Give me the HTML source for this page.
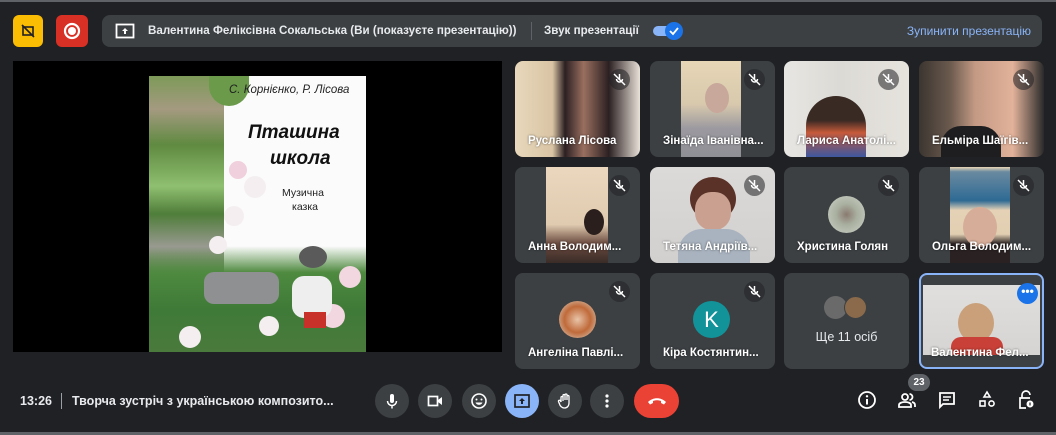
<!DOCTYPE html>
<html><head><meta charset="utf-8"><style>
*{margin:0;padding:0;box-sizing:border-box}
body{width:1056px;height:435px;background:#202124;font-family:"Liberation Sans",sans-serif;color:#e8eaed;position:relative;overflow:hidden}
.a{position:absolute}
.tile{position:absolute;width:125px;height:96px;background:#3c4043;border-radius:8px;overflow:hidden}
.nm{position:absolute;left:13px;bottom:10px;font-size:11.5px;font-weight:bold;color:#fff;white-space:nowrap;text-shadow:0 0 2px rgba(0,0,0,.6)}
.mic{position:absolute;right:10px;top:8px;width:21px;height:21px;border-radius:50%;background:rgba(32,33,36,.55)}
.mic svg{position:absolute;left:3px;top:3px}
.btn{position:absolute;top:384px;width:34px;height:34px;border-radius:50%;background:#3c4043}
.btn svg{position:absolute;left:8px;top:8px}
.ri{position:absolute;top:390px}
.fl{position:absolute;border-radius:50%;background:#f4eef0}
</style></head><body>
<div class="a" style="left:0;top:0;width:1056px;height:2px;background:#5f6368"></div>
<!-- top -->
<div class="a" style="left:13px;top:15px;width:30px;height:32px;background:#fbbc04;border-radius:6px"><svg width="30" height="32"><g stroke="#202124" stroke-width="1.6" fill="none"><rect x="10" y="12" width="10" height="8"/><line x1="9" y1="10" x2="21" y2="22"/></g></svg></div>
<div class="a" style="left:56px;top:15px;width:32px;height:32px;background:#d93025;border-radius:6px"><svg width="32" height="32"><circle cx="16" cy="16" r="7" fill="none" stroke="#fff" stroke-width="2.2"/><circle cx="16" cy="16" r="4" fill="#fff"/></svg></div>
<div class="a" style="left:102px;top:15px;width:940px;height:32px;background:#3c4043;border-radius:8px">
<svg class="a" style="left:13px;top:8px" width="20" height="16"><rect x="1.5" y="1.5" width="17" height="13" fill="none" stroke="#fff" stroke-width="1.8"/><path d="M10 5l-3 3h2v3h2V8h2z" fill="#fff"/></svg>
<div class="a" style="left:46px;top:9px;font-size:11.6px;font-weight:bold;color:#e8eaed;white-space:nowrap">Валентина Феліксівна Сокальська (Ви (показуєте презентацію))</div>
<div class="a" style="left:429px;top:7px;width:1px;height:18px;background:#5f6368"></div>
<div class="a" style="left:442px;top:9px;font-size:11.6px;font-weight:bold;white-space:nowrap">Звук презентації</div>
<div class="a" style="left:551px;top:11px;width:26px;height:10px;border-radius:5px;background:#8ab4f8"></div>
<div class="a" style="left:563px;top:7px;width:18px;height:18px;border-radius:50%;background:#1a73e8"><svg width="18" height="18"><path d="M5 9l3 3 5-6" stroke="#fff" stroke-width="1.8" fill="none"/></svg></div>
<div class="a" style="right:11px;top:9px;font-size:12px;color:#8ab4f8">Зупинити презентацію</div>
</div>
<!-- presentation -->
<div class="a" style="left:13px;top:61px;width:489px;height:291px;background:#000"></div>
<div class="a" style="left:149px;top:76px;width:217px;height:276px;background:#fbfbfb;overflow:hidden">
<div class="a" style="left:0;top:0;width:75px;height:276px;background:linear-gradient(180deg,#7d9a58,#a49a80 12%,#5f8a40 25%,#8fbf70 40%,#4f7d3a 50%,#9a9a92 62%,#5c8040 80%,#3d6b30)"></div>
<div class="a" style="left:60px;top:0;width:40px;height:30px;background:#6a9a4a;border-radius:0 0 20px 20px"></div>
<div class="a" style="left:0;top:170px;width:217px;height:106px;background:linear-gradient(180deg,rgba(80,130,60,0) 0,#4f8a40 25%,#3f7a38 60%,#4a7a3c)"></div>
<div class="fl" style="left:80px;top:85px;width:18px;height:18px;background:#f0d0dc"></div>
<div class="fl" style="left:95px;top:100px;width:22px;height:22px"></div>
<div class="fl" style="left:75px;top:130px;width:20px;height:20px"></div>
<div class="fl" style="left:60px;top:160px;width:18px;height:18px"></div>
<div class="fl" style="left:190px;top:190px;width:22px;height:22px;background:#f2d6e0"></div>
<div class="fl" style="left:172px;top:228px;width:24px;height:24px;background:#f2d6e0"></div>
<div class="fl" style="left:110px;top:240px;width:20px;height:20px"></div>
<div class="fl" style="left:30px;top:250px;width:22px;height:22px"></div>
<div class="a" style="left:55px;top:196px;width:75px;height:32px;background:#8f9091;border-radius:10px"></div>
<div class="a" style="left:143px;top:200px;width:40px;height:42px;background:#eeeeee;border-radius:12px"></div>
<div class="a" style="left:150px;top:170px;width:28px;height:22px;background:#5a5a5a;border-radius:50%"></div>
<div class="a" style="left:155px;top:236px;width:22px;height:16px;background:#c8302a"></div>
<div class="a" style="left:80px;top:8px;font-size:11.5px;font-style:italic;color:#222">С. Корнієнко, Р. Лісова</div>
<div class="a" style="left:99px;top:46px;font-size:19px;font-weight:bold;font-style:italic;color:#111">Пташина</div>
<div class="a" style="left:121px;top:72px;font-size:19px;font-weight:bold;font-style:italic;color:#111">школа</div>
<div class="a" style="left:133px;top:111px;font-size:10.5px;color:#222">Музична</div>
<div class="a" style="left:143px;top:125px;font-size:10.5px;color:#222">казка</div>
</div>
<!-- tiles -->
<div class="tile" style="left:515px;top:61px;background:linear-gradient(90deg,#e8d8bc 0,#d9c4a4 30%,#2b2022 40%,#9a6f5f 55%,#2b2022 75%,#e9e2d8 100%)"><div class="mic"><svg width="15" height="15"><path d="M7.5 2v6M4.5 7a3 3 0 0 0 6 0M2 2l11 11" stroke="#fff" stroke-width="1.5" fill="none"/></svg></div><div class="nm">Руслана Лісова</div></div>
<div class="tile" style="left:650px;top:61px"><div class="a" style="left:31px;top:0;width:60px;height:96px;background:linear-gradient(180deg,#e7d6b6,#d8c9ad 45%,#9c9aa0 70%,#8f8f96)"></div><div class="a" style="left:55px;top:22px;width:24px;height:30px;border-radius:50%;background:#c7a89a"></div><div class="mic"><svg width="15" height="15"><path d="M7.5 2v6M4.5 7a3 3 0 0 0 6 0M2 2l11 11" stroke="#fff" stroke-width="1.5" fill="none"/></svg></div><div class="nm">Зінаїда Іванівна...</div></div>
<div class="tile" style="left:784px;top:61px;background:linear-gradient(90deg,#e8e6e2 0,#dcdad5 45%,#e6e3dd 100%)"><div class="a" style="left:22px;top:35px;width:60px;height:61px;border-radius:30px 30px 0 0;background:linear-gradient(180deg,#3a2a24 40%,#c65a3a 60%,#3e57a0)"></div><div class="mic"><svg width="15" height="15"><path d="M7.5 2v6M4.5 7a3 3 0 0 0 6 0M2 2l11 11" stroke="#fff" stroke-width="1.5" fill="none"/></svg></div><div class="nm">Лариса Анатолі...</div></div>
<div class="tile" style="left:919px;top:61px;background:linear-gradient(90deg,#3b3530 0,#6b5a4e 25%,#c49a85 45%,#e2b29a 75%,#2a2a2a 100%)"><div class="a" style="left:22px;top:65px;width:60px;height:31px;background:#1e1e20;border-radius:20px 20px 0 0"></div><div class="mic"><svg width="15" height="15"><path d="M7.5 2v6M4.5 7a3 3 0 0 0 6 0M2 2l11 11" stroke="#fff" stroke-width="1.5" fill="none"/></svg></div><div class="nm">Ельміра Шаїгів...</div></div>

<div class="tile" style="left:515px;top:167px"><div class="a" style="left:31px;top:0;width:62px;height:96px;background:linear-gradient(180deg,#ead7bd,#e0cbb0 60%,#6a4a3e 80%,#3a2c28)"></div><div class="a" style="left:69px;top:42px;width:20px;height:26px;border-radius:50%;background:#2a1f1c"></div><div class="mic"><svg width="15" height="15"><path d="M7.5 2v6M4.5 7a3 3 0 0 0 6 0M2 2l11 11" stroke="#fff" stroke-width="1.5" fill="none"/></svg></div><div class="nm">Анна Володим...</div></div>
<div class="tile" style="left:650px;top:167px;background:linear-gradient(180deg,#dcdad8,#d2d0ce)"><div class="a" style="left:40px;top:10px;width:46px;height:44px;border-radius:50%;background:#5a3228"></div><div class="a" style="left:45px;top:25px;width:36px;height:38px;border-radius:45%;background:#caa190"></div><div class="a" style="left:28px;top:62px;width:72px;height:34px;border-radius:24px 24px 0 0;background:#a9b3bf"></div><div class="mic"><svg width="15" height="15"><path d="M7.5 2v6M4.5 7a3 3 0 0 0 6 0M2 2l11 11" stroke="#fff" stroke-width="1.5" fill="none"/></svg></div><div class="nm">Тетяна Андріїв...</div></div>
<div class="tile" style="left:784px;top:167px"><div class="a" style="left:44px;top:29px;width:37px;height:37px;border-radius:50%;background:radial-gradient(circle,#8a7a70 0,#a9b0a0 40%,#cdd2c8 100%)"></div><div class="mic"><svg width="15" height="15"><path d="M7.5 2v6M4.5 7a3 3 0 0 0 6 0M2 2l11 11" stroke="#fff" stroke-width="1.5" fill="none"/></svg></div><div class="nm">Христина Голян</div></div>
<div class="tile" style="left:919px;top:167px"><div class="a" style="left:31px;top:0;width:60px;height:96px;background:linear-gradient(180deg,#e9d6b6 0,#6a8aa0 5%,#2e6a94 35%,#e5d2b6 45%,#e2cfb2 70%,#2a2222 80%)"></div><div class="a" style="left:44px;top:40px;width:34px;height:40px;border-radius:50%;background:#d6ad98"></div><div class="mic"><svg width="15" height="15"><path d="M7.5 2v6M4.5 7a3 3 0 0 0 6 0M2 2l11 11" stroke="#fff" stroke-width="1.5" fill="none"/></svg></div><div class="nm">Ольга Володим...</div></div>

<div class="tile" style="left:515px;top:273px"><div class="a" style="left:44px;top:28px;width:37px;height:37px;border-radius:50%;background:radial-gradient(circle,#e8c4a8 0,#c06a3a 50%,#dbd8cc 100%)"></div><div class="mic"><svg width="15" height="15"><path d="M7.5 2v6M4.5 7a3 3 0 0 0 6 0M2 2l11 11" stroke="#fff" stroke-width="1.5" fill="none"/></svg></div><div class="nm">Ангеліна Павлі...</div></div>
<div class="tile" style="left:650px;top:273px"><div class="a" style="left:43px;top:28px;width:37px;height:37px;border-radius:50%;background:#12939a;color:#fff;font-size:22px;text-align:center;line-height:37px">K</div><div class="mic"><svg width="15" height="15"><path d="M7.5 2v6M4.5 7a3 3 0 0 0 6 0M2 2l11 11" stroke="#fff" stroke-width="1.5" fill="none"/></svg></div><div class="nm">Кіра Костянтин...</div></div>
<div class="tile" style="left:784px;top:273px"><div class="a" style="left:40px;top:23px;width:23px;height:23px;border-radius:50%;background:#6a6a6a"></div><div class="a" style="left:60px;top:23px;width:23px;height:23px;border-radius:50%;background:#8a6a4a;border:1px solid #3c4043"></div><div class="a" style="left:0;width:125px;top:57px;text-align:center;font-size:12.5px;color:#e8eaed">Ще 11 осіб</div></div>
<div class="tile" style="left:919px;top:273px;border:2px solid #8ab4f8;background:#3c4043"><div class="a" style="left:2px;top:10px;width:117px;height:70px;background:linear-gradient(180deg,#e0dfdd,#d6d4d2)"></div><div class="a" style="left:37px;top:28px;width:36px;height:40px;border-radius:50%;background:#c9a07a"></div><div class="a" style="left:30px;top:62px;width:52px;height:18px;background:#c84038;border-radius:10px 10px 0 0"></div><div class="a" style="right:4px;top:8px;width:21px;height:21px;border-radius:50%;background:#1a73e8;color:#fff;font-size:12px;font-weight:bold;text-align:center;line-height:17px">•••</div><div class="nm" style="left:10px;bottom:8px">Валентина Фел...</div></div>

<!-- bottom -->
<div class="a" style="left:20px;top:394px;font-size:12.5px;font-weight:bold;color:#e8eaed">13:26</div>
<div class="a" style="left:61px;top:393px;width:1px;height:16px;background:#9aa0a6"></div>
<div class="a" style="left:72px;top:394px;font-size:12.5px;font-weight:bold;color:#e8eaed">Творча зустріч з українською композито...</div>

<div class="btn" style="left:375px"><svg width="18" height="18"><rect x="7" y="2" width="4" height="9" rx="2" fill="#fff"/><path d="M4.5 9a4.5 4.5 0 0 0 9 0M9 13.5v3" stroke="#fff" stroke-width="1.5" fill="none"/></svg></div>
<div class="btn" style="left:418px"><svg width="18" height="18"><rect x="2.5" y="4.5" width="9" height="9" fill="none" stroke="#fff" stroke-width="1.7"/><path d="M12 8l4-3v8l-4-3z" fill="#fff"/></svg></div>
<div class="btn" style="left:462px"><svg width="18" height="18"><circle cx="9" cy="9" r="7" fill="none" stroke="#fff" stroke-width="1.6"/><circle cx="6.5" cy="7.5" r="1" fill="#fff"/><circle cx="11.5" cy="7.5" r="1" fill="#fff"/><path d="M5.5 10.5a3.8 3.8 0 0 0 7 0z" fill="#fff"/></svg></div>
<div class="btn" style="left:505px;background:#8ab4f8"><svg width="18" height="18"><rect x="2" y="3" width="14" height="12" fill="none" stroke="#202124" stroke-width="1.7"/><path d="M9 6l-3 3h2v3h2V9h2z" fill="#202124"/></svg></div>
<div class="btn" style="left:548px"><svg width="18" height="18"><path d="M5 10V5.5a1 1 0 0 1 2 0V9M7 8V3.5a1 1 0 0 1 2 0V8M9 8V3a1 1 0 0 1 2 0v5M11 8V4.5a1 1 0 0 1 2 0V11c0 3-2 5-4.5 5S4 14 3.5 12L2.5 9.5a1 1 0 0 1 2-.5L5 10" stroke="#fff" stroke-width="1.3" fill="none"/></svg></div>
<div class="btn" style="left:590px"><svg width="18" height="18"><circle cx="9" cy="4" r="1.6" fill="#fff"/><circle cx="9" cy="9" r="1.6" fill="#fff"/><circle cx="9" cy="14" r="1.6" fill="#fff"/></svg></div>
<div class="a" style="left:634px;top:384px;width:45px;height:34px;border-radius:17px;background:#ea4335"><svg class="a" style="left:12px;top:9px" width="22" height="16"><path d="M2 9c5-5 13-5 18 0l-2 2.5-3-1.5v-2c-2.5-1-5.5-1-8 0v2L4 11.5z" fill="#fff"/></svg></div>

<svg class="ri" style="left:857px" width="20" height="20"><circle cx="10" cy="10" r="8" fill="none" stroke="#fff" stroke-width="1.8"/><rect x="9" y="9" width="2" height="5.5" fill="#fff"/><circle cx="10" cy="6.3" r="1.2" fill="#fff"/></svg>
<div class="a" style="left:908px;top:374px;width:22px;height:17px;border-radius:9px;background:#5f6368;font-size:10px;font-weight:bold;text-align:center;line-height:17px;color:#fff">23</div>
<svg class="ri" style="left:897px" width="20" height="20"><circle cx="8" cy="7" r="3" fill="none" stroke="#fff" stroke-width="1.8"/><path d="M2 17v-2c0-2 3-3 6-3s6 1 6 3v2z" fill="none" stroke="#fff" stroke-width="1.8"/><path d="M12.5 4a3 3 0 0 1 0 6M15 12c2 .5 3 1.5 3 3v2" stroke="#fff" stroke-width="1.8" fill="none"/></svg>
<svg class="ri" style="left:937px" width="20" height="20"><path d="M3 3h14v11H6l-3 3z" fill="none" stroke="#fff" stroke-width="1.8"/><path d="M6 7h8M6 10h6" stroke="#fff" stroke-width="1.6"/></svg>
<svg class="ri" style="left:977px" width="20" height="20"><path d="M10 2l3 5H7z" fill="none" stroke="#fff" stroke-width="1.6"/><rect x="3" y="11" width="5" height="5" fill="none" stroke="#fff" stroke-width="1.6"/><circle cx="14.5" cy="13.5" r="2.6" fill="none" stroke="#fff" stroke-width="1.6"/></svg>
<svg class="ri" style="left:1016px" width="20" height="20"><path d="M6 8V5a4 4 0 0 1 8 0" stroke="#fff" stroke-width="1.7" fill="none"/><path d="M10 18H4V8h10" fill="none" stroke="#fff" stroke-width="1.7"/><circle cx="14" cy="14" r="3.5" fill="#fff"/><path d="M14 12.5v3" stroke="#202124" stroke-width="1.2"/></svg>
<div class="a" style="left:0;top:432px;width:1056px;height:3px;background:#5f6368"></div>
</body></html>
